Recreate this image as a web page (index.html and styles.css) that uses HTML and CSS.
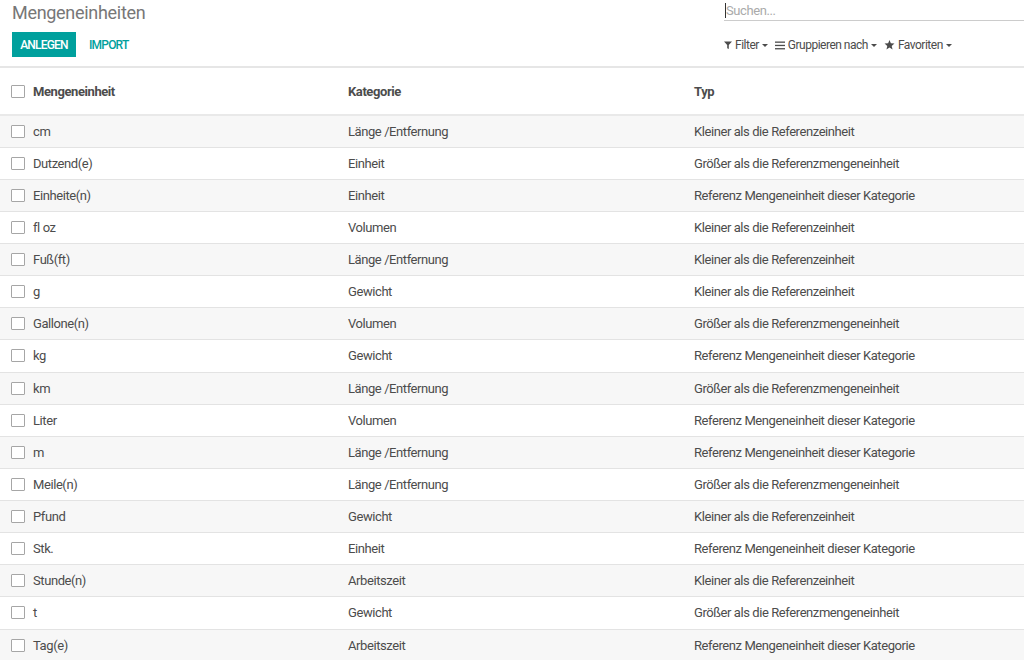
FILE: index.html
```html
<!DOCTYPE html>
<html lang="de">
<head>
<meta charset="utf-8">
<title>Mengeneinheiten</title>
<link rel="stylesheet" href="styles.css">
</head>
<body>
<div class="cp">
  <div class="cp-left">
    <div class="title">Mengeneinheiten</div>
    <div class="buttons">
      <button class="btn-primary">ANLEGEN</button>
      <button class="btn-link">IMPORT</button>
    </div>
  </div>
  <div class="cp-right">
    <div class="search"><span class="cursor"></span><span class="ph">Suchen...</span></div>
    <div class="filters">
      <span class="fitem"><svg width="8" height="9" viewBox="0 0 10 10"><path d="M0 0H10L6 4.5V9.5L4 8.5V4.5Z" fill="#4c4c4c"/></svg>Filter<span class="caret"></span></span>
      <span class="fitem"><svg width="10" height="9" viewBox="0 0 10 9"><rect x="0" y="0.5" width="10" height="1.3" fill="#4c4c4c"/><rect x="0" y="3.8" width="10" height="1.3" fill="#4c4c4c"/><rect x="0" y="7.1" width="10" height="1.3" fill="#4c4c4c"/></svg>Gruppieren nach<span class="caret"></span></span>
      <span class="fitem"><svg width="11" height="10" viewBox="0 0 24 23"><path d="M12 0L15.1 7.6L23.4 8.3L17.1 13.7L19 21.8L12 17.5L5 21.8L6.9 13.7L0.6 8.3L8.9 7.6Z" fill="#4c4c4c"/></svg>Favoriten<span class="caret"></span></span>
    </div>
  </div>
</div>
<table class="list">
  <thead>
    <tr><th class="c1"><span class="cb"></span>Mengeneinheit</th><th class="c2">Kategorie</th><th class="c3">Typ</th></tr>
  </thead>
  <tbody>
    <tr><td class="c1"><span class="cb"></span>cm</td><td>Länge /Entfernung</td><td>Kleiner als die Referenzeinheit</td></tr>
    <tr><td class="c1"><span class="cb"></span>Dutzend(e)</td><td>Einheit</td><td>Größer als die Referenzmengeneinheit</td></tr>
    <tr><td class="c1"><span class="cb"></span>Einheite(n)</td><td>Einheit</td><td>Referenz Mengeneinheit dieser Kategorie</td></tr>
    <tr><td class="c1"><span class="cb"></span>fl oz</td><td>Volumen</td><td>Kleiner als die Referenzeinheit</td></tr>
    <tr><td class="c1"><span class="cb"></span>Fuß(ft)</td><td>Länge /Entfernung</td><td>Kleiner als die Referenzeinheit</td></tr>
    <tr><td class="c1"><span class="cb"></span>g</td><td>Gewicht</td><td>Kleiner als die Referenzeinheit</td></tr>
    <tr><td class="c1"><span class="cb"></span>Gallone(n)</td><td>Volumen</td><td>Größer als die Referenzmengeneinheit</td></tr>
    <tr><td class="c1"><span class="cb"></span>kg</td><td>Gewicht</td><td>Referenz Mengeneinheit dieser Kategorie</td></tr>
    <tr><td class="c1"><span class="cb"></span>km</td><td>Länge /Entfernung</td><td>Größer als die Referenzmengeneinheit</td></tr>
    <tr><td class="c1"><span class="cb"></span>Liter</td><td>Volumen</td><td>Referenz Mengeneinheit dieser Kategorie</td></tr>
    <tr><td class="c1"><span class="cb"></span>m</td><td>Länge /Entfernung</td><td>Referenz Mengeneinheit dieser Kategorie</td></tr>
    <tr><td class="c1"><span class="cb"></span>Meile(n)</td><td>Länge /Entfernung</td><td>Größer als die Referenzmengeneinheit</td></tr>
    <tr><td class="c1"><span class="cb"></span>Pfund</td><td>Gewicht</td><td>Kleiner als die Referenzeinheit</td></tr>
    <tr><td class="c1"><span class="cb"></span>Stk.</td><td>Einheit</td><td>Referenz Mengeneinheit dieser Kategorie</td></tr>
    <tr><td class="c1"><span class="cb"></span>Stunde(n)</td><td>Arbeitszeit</td><td>Kleiner als die Referenzeinheit</td></tr>
    <tr><td class="c1"><span class="cb"></span>t</td><td>Gewicht</td><td>Größer als die Referenzmengeneinheit</td></tr>
    <tr><td class="c1"><span class="cb"></span>Tag(e)</td><td>Arbeitszeit</td><td>Referenz Mengeneinheit dieser Kategorie</td></tr>
  </tbody>
</table>
</body>
</html>
```
FILE: styles.css
```css
* { box-sizing: border-box; }
html, body { margin: 0; padding: 0; background: #fff; overflow: hidden; }
body { font-family: Roboto, "Liberation Sans", sans-serif; font-size: 13px; color: #4c4c4c; letter-spacing: -0.42px; }

.cp {
  display: flex;
  justify-content: space-between;
  height: 68px;
  border-bottom: 2px solid #e6e6e6;
}
.cp-left { padding-left: 12px; }
.title { font-size: 18px; color: #777; line-height: 26px; height: 32px; letter-spacing: -0.3px; }
.buttons { display: flex; align-items: center; }
.btn-primary {
  font-family: inherit; font-size: 12px; font-weight: 500; letter-spacing: -0.8px;
  background: #00a09d; color: #fff; border: 1px solid #00a09d;
  height: 25px; width: 64px; padding: 0; border-radius: 0;
}
.btn-link {
  font-family: inherit; font-size: 12px; font-weight: 500; letter-spacing: -0.8px;
  background: none; color: #00a09d; border: none; height: 25px;
  padding: 0 0 0 13px;
}
.cp-right { width: 300px; }
.search {
  height: 20px; margin-top: 1px; border-bottom: 1px solid #ccc;
  display: flex; align-items: center; padding-left: 1px;
  font-size: 13px;
}
.cursor { width: 1px; height: 15px; background: #333; }
.ph { color: #aaa; }
.filters { display: flex; align-items: center; margin-top: 15px; height: 18px; font-size: 12px; letter-spacing: -0.5px; }
.fitem { display: inline-flex; align-items: center; margin-right: 7px; }
.fitem svg { margin-right: 3px; }
.caret {
  display: inline-block; width: 0; height: 0; margin-left: 3px;
  border-left: 3px solid transparent; border-right: 3px solid transparent;
  border-top: 3px solid #4c4c4c;
}

.list { width: 100%; border-collapse: collapse; }
.list th, .list td { text-align: left; padding: 0; white-space: nowrap; }
.list thead th {
  height: 47px; font-weight: 700; color: #4c4c4c;
  border-bottom: 2px solid #e9e9e9;
}
.list tbody td { height: 32.125px; border-top: 1px solid #e3e3e3; }
.list tbody tr:nth-child(odd) td { background: #f7f7f7; }
.list tbody tr:first-child td { border-top: none; }
.c1 { width: 348px; padding-left: 11px !important; }
.c2 { width: 346px; }
.cb {
  display: inline-block; width: 14px; height: 13px; vertical-align: -2px;
  border: 1px solid #a6a6a6; border-radius: 1px; background: #fff; margin-right: 8px;
}
```
